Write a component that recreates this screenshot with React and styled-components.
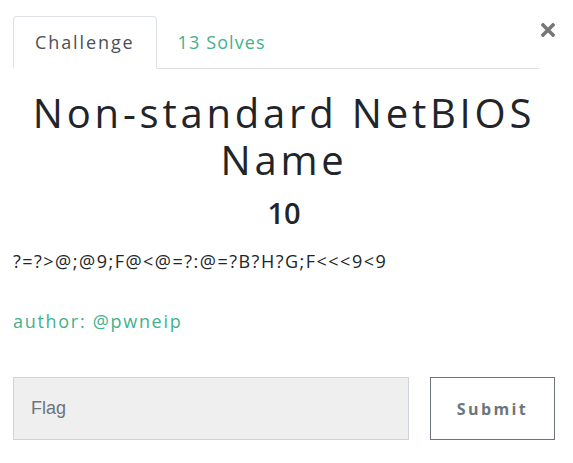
import React from 'react'
import styled, {createGlobalStyle} from 'styled-components'

const GlobalStyle = createGlobalStyle`
    html, body {
        margin: 0;
        padding: 0;
        background: #fff;
    }
    body {
        font-family: "Open Sans", "Liberation Sans", sans-serif;
        color: #212529;
    }
`

const Modal = styled.div`
    width: 573px;
    box-sizing: border-box;
    padding: 16px 18px 0 13px;
`

const Header = styled.div`
    display: flex;
    align-items: flex-start;
`

const Tabs = styled.nav`
    flex: 1;
    display: flex;
    border-bottom: 1px solid #dee2e6;
`

const Tab = styled.a`
    display: block;
    height: 53px;
    box-sizing: border-box;
    margin-bottom: -1px;
    padding: 0 ${p => p.$active ? 21 : 20}px;
    line-height: 51px;
    font-size: 18px;
    letter-spacing: ${p => p.$active ? 1.9 : 1.1}px;
    color: ${p => p.$active ? '#495057' : '#42b18b'};
    background: ${p => p.$active ? '#fff' : 'transparent'};
    border: 1px solid ${p => p.$active ? '#dee2e6' : 'transparent'};
    border-bottom-color: ${p => p.$active ? '#fff' : 'transparent'};
    border-radius: 4px 4px 0 0;
    text-decoration: none;
    cursor: pointer;
`

const Close = styled.button`
    width: 16px;
    margin-top: 7px;
    padding: 0;
    border: 0;
    background: none;
    display: flex;
    justify-content: flex-end;
    cursor: pointer;
`

const Title = styled.h2`
    margin: 20px 0 0;
    text-align: center;
    font-size: 40px;
    font-weight: 400;
    line-height: 47px;
    letter-spacing: 3.8px;
    color: #212529;
`

const Points = styled.h3`
    margin: 12px 0 0;
    text-align: center;
    font-size: 29px;
    font-weight: 600;
    line-height: 36px;
    color: #212529;
`

const Description = styled.p`
    margin: 18px 0 0;
    font-size: 18px;
    line-height: 24px;
    letter-spacing: 1.5px;
    color: #212529;
`

const Author = styled.p`
    margin: 36px 0 0;
    font-size: 18px;
    line-height: 24px;
    letter-spacing: 1.7px;
    color: #42b18b;
`

const Form = styled.form`
    display: flex;
    gap: 21px;
    margin-top: 44px;
`

const FlagInput = styled.input`
    flex: 1;
    height: 63px;
    box-sizing: border-box;
    padding: 0 17px;
    border: 1px solid #ced4da;
    background: #efefef;
    font-family: "Liberation Sans", Arial, sans-serif;
    font-size: 18px;
    color: #495057;
    outline: none;
    &::placeholder {
        color: #6c757d;
    }
`

const SubmitButton = styled.button`
    width: 125px;
    height: 63px;
    box-sizing: border-box;
    border: 1px solid #6c757d;
    background: #fff;
    font-family: "Open Sans", "Liberation Sans", sans-serif;
    font-size: 16px;
    font-weight: 700;
    letter-spacing: 2.4px;
    color: #6c757d;
    cursor: pointer;
`

export default function App() {
    return (
        <>
            <GlobalStyle/>
            <Modal>
                <Header>
                    <Tabs>
                        <Tab $active>Challenge</Tab>
                        <Tab>13 Solves</Tab>
                    </Tabs>
                    <Close aria-label="Close">
                        <svg width="14" height="14" viewBox="0 0 14 14">
                            <path d="M2 2 L12 12 M12 2 L2 12" stroke="#777" strokeWidth="3.6" strokeLinecap="square"/>
                        </svg>
                    </Close>
                </Header>
                <Title>Non-standard NetBIOS Name</Title>
                <Points>10</Points>
                <Description>?=?&gt;@;@9;F@&lt;@=?:@=?B?H?G;F&lt;&lt;&lt;9&lt;9</Description>
                <Author>author: @pwneip</Author>
                <Form onSubmit={e => e.preventDefault()}>
                    <FlagInput placeholder="Flag"/>
                    <SubmitButton type="submit">Submit</SubmitButton>
                </Form>
            </Modal>
        </>
    )
}
